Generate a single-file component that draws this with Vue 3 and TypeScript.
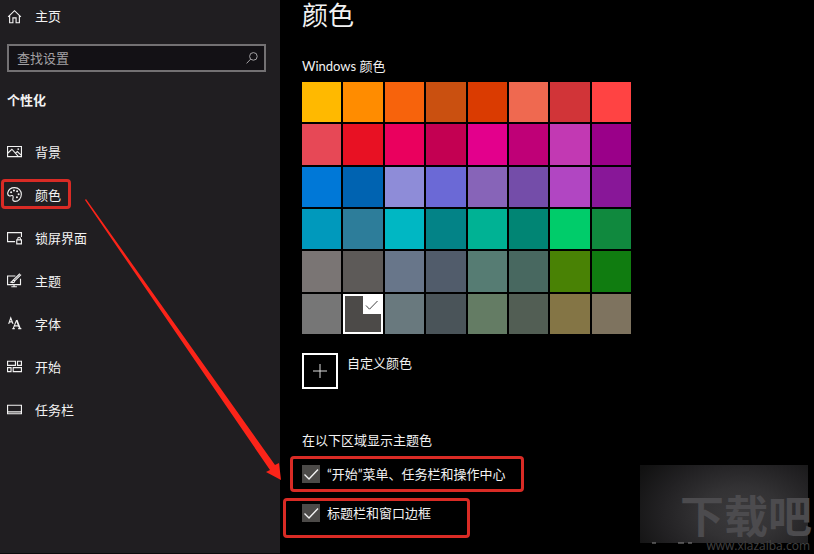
<script setup lang="ts">
import { ref } from 'vue'

interface NavItem {
  id: string
  label: string
}

const navItems: NavItem[] = [
  { id: 'background', label: '背景' },
  { id: 'colors', label: '颜色' },
  { id: 'lock', label: '锁屏界面' },
  { id: 'themes', label: '主题' },
  { id: 'fonts', label: '字体' },
  { id: 'start', label: '开始' },
  { id: 'taskbar', label: '任务栏' },
]

const swatches: string[] = [
  '#ffb900', '#ff8c00', '#f7630c', '#ca5010', '#da3b01', '#ef6950', '#d13438', '#ff4343',
  '#e74856', '#e81123', '#ea005e', '#c30052', '#e3008c', '#bf0077', '#c239b3', '#9a0089',
  '#0078d7', '#0063b1', '#8e8cd8', '#6b69d6', '#8764b8', '#744da9', '#b146c2', '#881798',
  '#0099bc', '#2d7d9a', '#00b7c3', '#038387', '#00b294', '#018574', '#00cc6a', '#10893e',
  '#7a7574', '#5d5a58', '#68768a', '#515c6b', '#567c73', '#486860', '#498205', '#107c10',
  '#767676', '#4c4a48', '#69797e', '#4a5459', '#647c64', '#525e54', '#847545', '#7e735f',
]

const selected = ref<number>(41)
const query = ref<string>('')
const onStart = ref<boolean>(true)
const onTitle = ref<boolean>(true)
</script>

<template>
  <div class="page">
    <aside class="sidebar">
      <a class="row home" href="#home">
        <svg class="icon" viewBox="0 0 16 16"><path d="M1.200 8.400 8 1.800l6.800 6.600M2.800 7v7.600h3.500V9.400h3.400v5.200h3.500V7" /></svg>
        <span>主页</span>
      </a>
      <label class="search">
        <input v-model="query" type="text" placeholder="查找设置" aria-label="查找设置" />
        <svg class="glass" viewBox="0 0 12 12"><circle cx="7.4" cy="4.4" r="3.8" /><path d="M4.700 7.100.6 11.400" /></svg>
      </label>
      <h2 class="section">个性化</h2>
      <nav class="nav">
        <a
          v-for="item in navItems"
          :key="item.id"
          class="row"
          :class="{ marked: item.id === 'colors' }"
          :href="'#' + item.id"
        >
          <svg v-if="item.id === 'background'" class="icon" viewBox="0 0 16 16">
            <path d="M.6 2.600h14.800v10.800H.6zM1 9.600 5.200 5.600l6.600 7.400M9 9.800l2-1.800 4 3.800" /><circle class="solid" cx="12" cy="5.400" r="1" />
          </svg>
          <svg v-else-if="item.id === 'colors'" class="icon" viewBox="0 0 16 16">
            <path d="M.8 6.200C1.500 2.800 4.600.7 8.200.7c4.200 0 7.100 3.100 7.100 7.100 0 4.200-3 7.500-6.700 7.500-1.900 0-2.700-1-2.300-2.800.4-1.700.6-3-.6-3.400-1.300-.4-2 .9-3.200.4C1.200 9.100.5 7.800.8 6.200z" />
            <circle class="solid" cx="4.400" cy="5.600" r="1.100" /><circle class="solid" cx="7.400" cy="3.700" r="1.100" /><circle class="solid" cx="10.800" cy="4.600" r="1.100" /><circle class="solid" cx="12.400" cy="7.800" r="1.100" /><circle class="solid" cx="10.600" cy="11" r="1.100" />
          </svg>
          <svg v-else-if="item.id === 'lock'" class="icon" viewBox="0 0 16 16">
            <path d="M8.600 12.400H.6V2.800h14.800v4.600M10.400 10.500h5v4.300h-5zM11.500 10.500V9.200c0-2 2.800-2 2.800 0v1.300" />
          </svg>
          <svg v-else-if="item.id === 'themes'" class="icon" viewBox="0 0 16 16">
            <path d="M9 3.200H.6v9.200h13.800V6M7.500 12.400v2.200M4.600 14.700h6M15 1.700 7.900 8.700M13.700.8 6.600 7.700M7.300 7.600c-1.700 0-1.400 1.900-3.100 2.300 1.800.9 4.300.2 4-1.600z" />
          </svg>
          <svg v-else-if="item.id === 'fonts'" class="icon" viewBox="0 0 16 16">
            <path d="M1.800 8.400 4 2l2.400 6.400M2.600 6.200h3.200M6.600 13.500 10.200 4.400M8 10.500h4.800M5.700 13.500h2.600M11.900 13.500h3.400" />
            <path class="stem" d="m10.300 4.400 3.500 9" />
          </svg>
          <svg v-else-if="item.id === 'start'" class="icon" viewBox="0 0 16 16">
            <path d="M.6 2.400h8.400v4.400H.6zM11.200 2.400h4.200v4.400h-4.200zM.6 9.200h3.700v4.300H.6zM6.600 9.200h8.800v4.300H6.600z" />
          </svg>
          <svg v-else class="icon" viewBox="0 0 16 16"><path d="M.6 3.500h14.800v9H.6zM1 10.500h14" /></svg>
          <span>{{ item.label }}</span>
        </a>
      </nav>
    </aside>

    <main class="content">
      <h1>颜色</h1>
      <h3>Windows 颜色</h3>
      <div class="swatches">
        <button
          v-for="(color, i) in swatches"
          :key="color"
          type="button"
          class="swatch"
          :class="{ selected: selected === i }"
          :style="{ backgroundColor: color }"
          :aria-label="color"
          @click="selected = i"
        >
          <svg v-if="selected === i" class="tick" viewBox="0 0 18 18"><path d="m3 9.500 3.500 3.700L14.500 5" /></svg>
        </button>
      </div>
      <div class="custom">
        <button id="custom-color" type="button" class="plus">
          <svg viewBox="0 0 16 16"><path d="M8 1v14M1 8h14" /></svg>
        </button>
        <label for="custom-color">自定义颜色</label>
      </div>
      <h3 class="areas">在以下区域显示主题色</h3>
      <label class="check start">
        <span class="box">
          <input v-model="onStart" type="checkbox" />
          <svg v-if="onStart" viewBox="0 0 18 18"><path d="m2.500 9.500 4.500 4.500L16 4.500" /></svg>
        </span>
        <span>“开始”菜单、任务栏和操作中心</span>
      </label>
      <label class="check title">
        <span class="box">
          <input v-model="onTitle" type="checkbox" />
          <svg v-if="onTitle" viewBox="0 0 18 18"><path d="m2.500 9.500 4.500 4.500L16 4.500" /></svg>
        </span>
        <span>标题栏和窗口边框</span>
      </label>
    </main>

    <svg class="arrow" viewBox="0 0 200 286"><path d="M1 0 190 266 194 264 196 281 181 273 185 271 0 1z" /></svg>

    <div class="watermark">
      <div class="shade"></div>
      <svg class="specks" viewBox="0 0 60 4"><path d="M12 2h4M38 2h6M48 2h4" /></svg>
      <div class="brand">下载吧</div>
      <div class="site">www.xiazaiba.com</div>
    </div>
  </div>
</template>

<style>
body {
  margin: 0;
  background: #000;
}
</style>

<style scoped>
.page {
  position: relative;
  display: flex;
  min-height: 100vh;
  overflow: hidden;
  background: #000;
  color: #f2f2f2;
  font: 13px/20px Lato, "Noto Sans CJK SC", sans-serif;
}
.page *,
.page *::before,
.page *::after {
  box-sizing: border-box;
}
svg {
  display: block;
  fill: none;
  stroke: currentColor;
}
h1,
h2,
h3 {
  margin: 0;
  font-size: 13px;
  font-weight: 400;
}
.sidebar {
  flex: 0 0 280px;
  border-bottom: 1px solid #0c0b0c;
  background: #201e21;
}
.row {
  position: relative;
  display: flex;
  align-items: center;
  gap: 13px;
  height: 43px;
  padding-left: 7px;
  color: inherit;
  text-decoration: none;
}
.home {
  height: 32px;
}
.icon {
  width: 15px;
  height: 15px;
  stroke-width: 1.2;
}
.solid {
  fill: currentColor;
  stroke: none;
}
.stem {
  stroke-width: 1.8;
}
.search {
  display: flex;
  align-items: center;
  height: 28px;
  margin: 12px 14px 0 7px;
  padding: 0 6px 0 8px;
  border: 2px solid #737173;
  background: #131115;
  color: #a3a1a4;
}
.search input {
  flex: 1;
  min-width: 0;
  height: 20px;
  padding: 0;
  border: 0;
  outline: 0;
  background: none;
  color: inherit;
  font: inherit;
}
.search input::placeholder {
  color: #a3a1a4;
  opacity: 1;
}
.glass {
  width: 12px;
  height: 12px;
}
.section {
  margin: 18px 0 20px 7px;
  font-weight: 700;
}
.marked::after,
.check::before {
  content: "";
  position: absolute;
  border: 3px solid #d92b25;
  border-radius: 4px;
  pointer-events: none;
}
.marked::after {
  top: 6px;
  left: 1px;
  width: 70px;
  height: 30px;
}
.content {
  flex: 1;
  min-width: 0;
  padding: 0 22px;
}
h1 {
  margin-bottom: 26px;
  font-size: 26px;
  line-height: 30px;
}
.swatches {
  display: grid;
  grid-template-columns: repeat(8, 1fr);
  grid-template-rows: repeat(6, 1fr);
  gap: 2px;
  max-width: 329px;
  height: 252px;
  margin-top: 6px;
}
.swatch {
  display: flex;
  justify-content: flex-end;
  align-items: flex-start;
  padding: 0;
  border: 0;
}
.selected {
  border: 2px solid #fff;
}
.tick {
  width: 18px;
  height: 18px;
  background: #fff;
  color: #444;
}
.custom {
  display: flex;
  align-items: flex-start;
  gap: 9px;
  margin-top: 19px;
}
.plus {
  display: grid;
  place-items: center;
  width: 36px;
  height: 36px;
  padding: 0;
  border: 2px solid #fff;
  background: none;
  color: #ddd;
}
.plus svg {
  width: 16px;
  height: 16px;
}
.areas {
  margin-top: 41px;
}
.check {
  position: relative;
  display: flex;
  align-items: center;
  gap: 7px;
  width: fit-content;
  margin-top: 14px;
}
.check.title {
  margin-top: 19px;
}
.start::before {
  top: -8px;
  left: -12px;
  width: 234px;
  height: 36px;
}
.title::before {
  top: -5px;
  left: -19px;
  width: 187px;
  height: 40px;
}
.box {
  display: grid;
  width: 18px;
  height: 18px;
}
.box > * {
  grid-area: 1 / 1;
  width: 18px;
  height: 18px;
  margin: 0;
}
.box input {
  appearance: none;
  background: #4c4a48;
}
.box svg {
  z-index: 1;
  stroke-width: 1.4;
  pointer-events: none;
}
.arrow {
  position: absolute;
  top: 199px;
  left: 85px;
  width: 200px;
  height: 286px;
  fill: #fb2419;
  stroke: none;
  pointer-events: none;
}
.watermark {
  position: absolute;
  right: 0;
  bottom: 0;
  width: 174px;
  height: 89px;
  pointer-events: none;
}
.shade {
  width: 168px;
  height: 78px;
  background: radial-gradient(ellipse 100px 66px at 60% 62%, #3b3a3c 0%, #333234 40%, #222123 80%, #111 120%);
}
.specks {
  position: absolute;
  top: 76px;
  left: 0;
  width: 60px;
  height: 4px;
  color: #8c8b8c;
}
.brand {
  position: absolute;
  right: 2px;
  bottom: 16px;
  color: #4c4b4e;
  font-size: 44px;
  font-weight: 700;
  line-height: 44px;
  white-space: nowrap;
}
.site {
  position: absolute;
  right: 4px;
  bottom: 1px;
  color: #414042;
  font-family: "Open Sans", sans-serif;
  font-size: 12px;
  line-height: 14px;
}
</style>
